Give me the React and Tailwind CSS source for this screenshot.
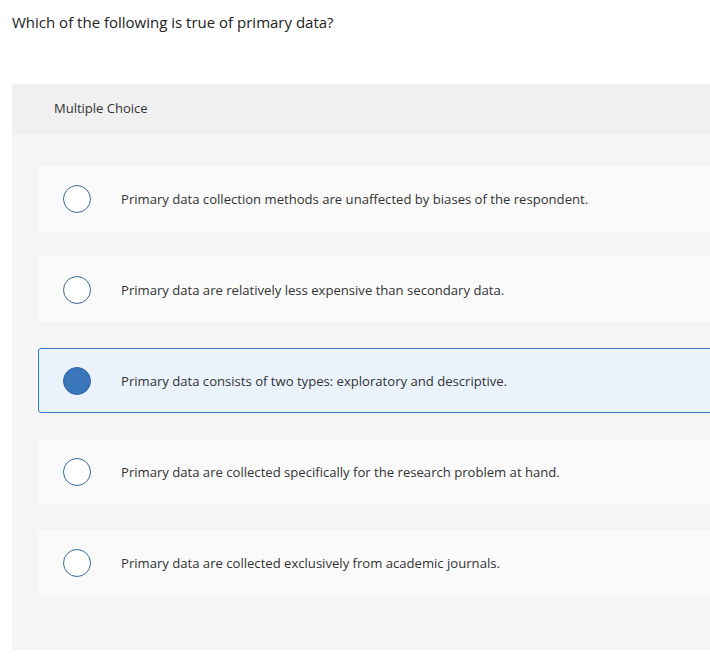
import React from 'react'

const options = [
  'Primary data collection methods are unaffected by biases of the respondent.',
  'Primary data are relatively less expensive than secondary data.',
  'Primary data consists of two types: exploratory and descriptive.',
  'Primary data are collected specifically for the research problem at hand.',
  'Primary data are collected exclusively from academic journals.',
]

function Option({ text, selected }) {
  return (
    <div
      className={`flex items-center h-[65px] rounded-l-[3px] border ${
        selected ? 'bg-[#eaf2fc] border-[#3a78c3]' : 'bg-[#fafafa] border-[#fafafa]'
      }`}
    >
      <span
        className={`ml-[24px] w-[28px] h-[28px] rounded-full border-[1.5px] shrink-0 ${
          selected ? 'bg-[#3b76bb] border-[#2f64a3]' : 'bg-white border-[#3a6a9c]'
        }`}
      />
      <span className="ml-[30px] text-[13.1px] text-[#333] leading-[18px]">{text}</span>
    </div>
  )
}

export default function App() {
  const selected = 2
  return (
    <div className="w-[710px] h-[658px] overflow-hidden bg-white" style={{ fontFamily: '"Open Sans", sans-serif' }}>
      <p className="pt-[12px] pl-[12px] text-[15px] text-[#222] leading-[20px]">
        Which of the following is true of primary data?
      </p>

      <div className="mt-[52px] ml-[12px] w-[740px] rounded-[3px] bg-[#f5f5f5] overflow-hidden">
        <div className="h-[50px] bg-[#f0f0f0] flex items-center pl-[42px] text-[13px] text-[#333]">
          Multiple Choice
        </div>
        <div className="pl-[26px] pt-[32px] pb-[55px] flex flex-col gap-[26px]">
          {options.map((o, i) => (
            <Option key={i} text={o} selected={i === selected} />
          ))}
        </div>
      </div>
    </div>
  )
}
